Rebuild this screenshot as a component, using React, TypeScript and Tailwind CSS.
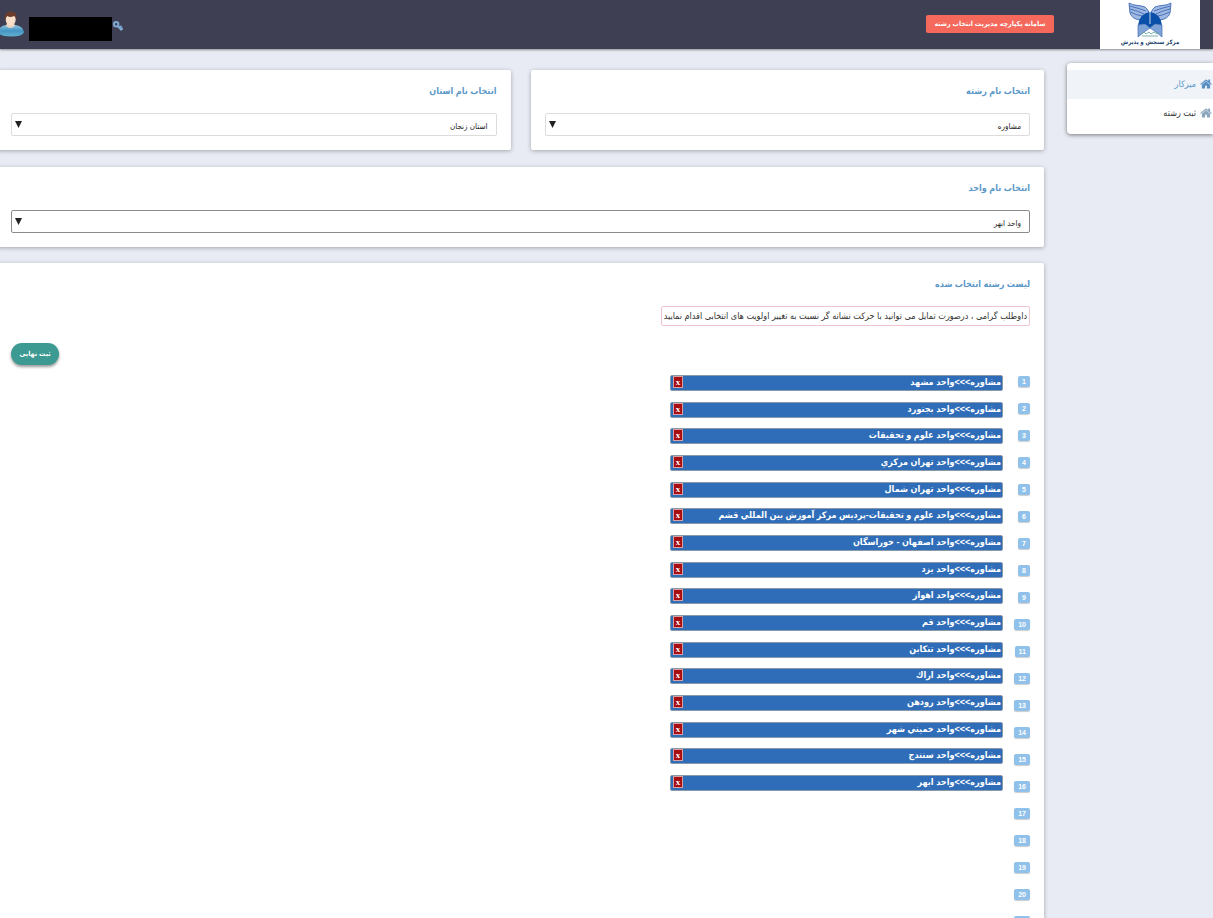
import { useState } from "react";

const choices = [
  "واحد مشهد",
  "واحد بجنورد",
  "واحد علوم و تحقيقات",
  "واحد تهران مركزي",
  "واحد تهران شمال",
  "واحد علوم و تحقيقات-پرديس مركز آموزش بين المللي قشم",
  "واحد اصفهان - خوراسگان",
  "واحد يزد",
  "واحد اهواز",
  "واحد قم",
  "واحد تنكابن",
  "واحد اراك",
  "واحد رودهن",
  "واحد خميني شهر",
  "واحد سنندج",
  "واحد ابهر",
];

const ranks = Array.from({ length: 21 }, (_, i) => i + 1);

function Logo() {
  return (
    <svg viewBox="0 0 44 36" className="h-9 w-11 shrink-0" aria-hidden="true">
      <path d="M1 1 C5 4 13 3 17 5 Q20 7 21 11 Q15 12 12 18 Q4 17 2 11 Z" fill="#9fb9e2" />
      <path d="M43 1 C39 4 31 3 27 5 Q24 7 23 11 Q29 12 32 18 Q40 17 42 11 Z" fill="#9fb9e2" />
      <g fill="none" stroke="#3d69b4" strokeWidth="0.9">
        <path d="M1 1 C5 4 13 3 17 5 Q20 7 21 11 M1.500 4 Q10 6 18 9 M2 7 Q10 9 16 12 M2.500 10 Q8 13 14 14 M1 1 L2 11 Q4 17 12 18" />
        <path d="M43 1 C39 4 31 3 27 5 Q24 7 23 11 M42.500 4 Q34 6 26 9 M42 7 Q34 9 28 12 M41.500 10 Q36 13 30 14 M43 1 L42 11 Q40 17 32 18" />
      </g>
      <path d="M10 23 Q12 11 22 10 Q32 11 34 23 L27 22 L22 26 L17 22 Z" fill="#0b50a8" />
      <path d="M10 23 L17 22 L22 26 L16 30 L10 35 Z M34 23 L27 22 L22 26 L28 30 L34 35 Z" fill="#7fa3d6" stroke="#2b5cad" strokeWidth="0.6" />
      <path d="M22 9 V22" stroke="#d5e2f4" strokeWidth="0.9" />
      <path d="M13 32 l3 -2 2 2 3 -2 2 2 3 -2 3 2 2 -2 M14 34 h16" fill="none" stroke="#6fa8a4" strokeWidth="0.9" />
    </svg>
  );
}

function Avatar() {
  return (
    <svg viewBox="0 0 26 26" className="h-[26px] w-[26px]" aria-hidden="true">
      <defs>
        <linearGradient id="shirt" x1="0" y1="0" x2="0" y2="1">
          <stop offset="0" stopColor="#8cc4e0" />
          <stop offset="0.5" stopColor="#4596c4" />
          <stop offset="1" stopColor="#62b0cf" />
        </linearGradient>
      </defs>
      <path d="M0 21 Q1 15 8 14 H17 Q25 15 26 21 Q25 25.500 13 25.500 Q1 25.500 0 21 Z" fill="url(#shirt)" />
      <path d="M9 12 H16 L17 15 Q12.500 19 8 15 Z" fill="#ead5c5" />
      <ellipse cx="12.700" cy="8.500" rx="5" ry="6" fill="#f8dfca" />
      <path d="M7 10 Q5 1 12.500 0.500 Q20 0.500 18.700 10 Q18.500 6 16 5 Q12 7 9.500 5 Q7.500 6 7 10 Z" fill="#6b3c2b" />
    </svg>
  );
}

function KeyIcon() {
  return (
    <svg viewBox="0 0 10 10" className="size-[10px]" fill="none" stroke="#7ea9d3" strokeWidth="2" aria-hidden="true">
      <circle cx="3.200" cy="3.200" r="2.200" />
      <path d="M4.800 5 L8.800 9.400 M8.600 5 L6.300 7 M9.800 7 L8 8.600" />
    </svg>
  );
}

function HomeIcon({ className }: { className: string }) {
  return (
    <svg viewBox="64 190 1664 1400" className={"mb-0.5 h-[10px] w-3 " + className} fill="currentColor" aria-hidden="true">
      <path d="M1472 992v480q0 26-19 45t-45 19h-384v-384H768v384H384q-26 0-45-19t-19-45V992q0-1 .5-3t.5-3l575-474 575 474q1 2 1 6zm223-69l-62 74q-8 9-21 11h-3q-13 0-21-7L896 424l-692 577q-12 8-24 7-13-2-21-11l-62-74q-8-10-7-23.500t11-21.500l719-599q32-26 76-26t76 26l244 204V288q0-14 9-23t23-9h192q14 0 23 9t9 23v408l219 182q10 8 11 21.500t-7 23.500z" />
    </svg>
  );
}

type PickerProps = { id: string; label: string; options: string[]; active?: boolean };

function Picker({ id, label, options, active }: PickerProps) {
  return (
    <section className="flex flex-1 flex-col gap-3 rounded-xs bg-white px-3.5 pt-[11px] pb-3.5 shadow-[0_1px_4px_rgba(0,0,0,0.3)]">
      <label htmlFor={id} className="text-[9px] leading-5 font-bold text-[#5b98c8]">
        {label}
      </label>
      <div className="relative">
        <select
          id={id}
          className={
            "block h-[23px] w-full appearance-none rounded-xs border bg-white px-2 pt-1 text-[8px] text-[#222] outline-none " +
            (active ? "border-[#8b8b8b]" : "border-[#dcdcdc]")
          }
        >
          {options.map((option) => (
            <option key={option}>{option}</option>
          ))}
        </select>
        <svg viewBox="0 0 7 7" className="pointer-events-none absolute top-2 left-1 size-[7px]" aria-hidden="true">
          <path d="M0 0 H7 L3.500 7 Z" fill="#222" />
        </svg>
      </div>
    </section>
  );
}

export default function App() {
  const [items, setItems] = useState(choices);

  return (
    <div
      dir="rtl"
      className="flex h-screen flex-col overflow-hidden bg-[#e8ebf3] font-['Liberation_Sans','DejaVu_Sans_Condensed','DejaVu_Sans',sans-serif] text-[#333]"
    >
      <header className="flex h-[49px] shrink-0 items-start bg-[#3e3f52] pr-[13px] shadow-[0_1px_2px_rgba(0,0,0,0.4)]">
        <a href="#home" className="flex h-[49px] w-[100px] flex-col items-center bg-white pt-0.5 text-[#17406b]">
          <Logo />
          <span className="-mt-px text-[6px] leading-[10px] font-bold whitespace-nowrap">مرکز سنجش و پذیرش</span>
        </a>
        <button
          type="button"
          className="mt-[15px] mr-[46px] h-[18px] w-32 rounded-xs bg-[#f4695c] text-[7px] font-bold whitespace-nowrap text-white"
        >
          سامانه یکپارچه مدیریت انتخاب رشته
        </button>
        <div className="mr-auto flex items-start">
          <a href="#password" className="mt-[21px]" aria-label="تغییر رمز">
            <KeyIcon />
          </a>
          <div className="mt-[17px] mr-px h-6 w-[83px] bg-black" />
          <div className="mt-[11px] mr-[5px] -ml-0.5">
            <Avatar />
          </div>
        </div>
      </header>

      <div className="flex min-h-0 flex-1">
        <aside className="mt-3.5 w-[146px] shrink-0">
          <nav className="rounded-l bg-white pt-[7px] pb-[5px] text-[9px] shadow-[0_1px_4px_rgba(0,0,0,0.5)]">
            <a href="#desk" className="flex h-[29px] items-center gap-1 bg-[#f0f4f8] pr-px text-[#5b98c8]">
              <HomeIcon className="text-[#5b8fc4]" />
              میزکار
            </a>
            <a href="#register" className="flex h-[30px] items-center gap-1 pr-px text-[#333]">
              <HomeIcon className="text-[#8ba5bd]" />
              ثبت رشته
            </a>
          </nav>
        </aside>

        <main className="mr-[23px] -ml-[3px] flex min-w-0 flex-1 flex-col gap-[17px] pt-[21px]">
          <div className="flex gap-5">
            <Picker id="field" label="انتخاب نام رشته" options={["مشاوره"]} />
            <Picker id="province" label="انتخاب نام استان" options={["استان زنجان"]} />
          </div>
          <div className="flex">
            <Picker id="unit" label="انتخاب نام واحد" options={["واحد ابهر"]} active />
          </div>

          <section className="-mt-px flex-1 rounded-xs bg-white px-3.5 pt-[11px] shadow-[0_1px_4px_rgba(0,0,0,0.3)]">
            <h2 className="text-[9px] leading-5 font-bold text-[#5b98c8]">لیست رشته انتخاب شده</h2>
            <p className="mt-3 w-fit rounded-xs border border-[#efc5cf] px-0.5 text-[9px] leading-[18px] whitespace-nowrap">
              داوطلب گرامی ، درصورت تمایل می توانید با حرکت نشانه گر نسبت به تغییر اولویت های انتخابی اقدام نمایید
            </p>
            <div className="mt-[17px] flex justify-end">
              <button
                type="button"
                className="h-[22px] w-12 rounded-full bg-[#3c9a92] text-[7px] font-bold whitespace-nowrap text-white shadow-[0_2px_3px_rgba(0,0,0,0.4)]"
              >
                ثبت نهایی
              </button>
            </div>
            <div className="mt-2.5 flex items-start gap-3">
              <ol className="flex w-[15px] flex-col gap-4 pt-px">
                {ranks.map((rank) => (
                  <li
                    key={rank}
                    className="h-[11px] min-w-[11px] self-start rounded-xs bg-[#8fc1ea] px-1 text-center text-[7px] leading-[11px] font-bold text-white shadow-[0_1px_1px_rgba(0,0,0,0.2)]"
                  >
                    {rank}
                  </li>
                ))}
              </ol>
              <ul className="flex h-[416px] w-[333px] flex-col justify-between">
                {items.map((item) => (
                  <li
                    key={item}
                    className="flex h-4 items-start justify-between rounded-xs border border-[#8899ab] bg-[#2f6db9] pr-px pl-0.5 text-[9px] leading-3 font-bold whitespace-nowrap text-white"
                  >
                    <span>{"مشاوره>>>" + item}</span>
                    <button
                      type="button"
                      aria-label="حذف"
                      onClick={() => setItems(items.filter((other) => other !== item))}
                      className="h-3 w-[10px] shrink-0 border border-[#d9a0a0] bg-[#a80d12] font-['Liberation_Serif',serif] text-[9px] leading-[8px] font-bold"
                    >
                      x
                    </button>
                  </li>
                ))}
              </ul>
            </div>
          </section>
        </main>
      </div>
    </div>
  );
}
